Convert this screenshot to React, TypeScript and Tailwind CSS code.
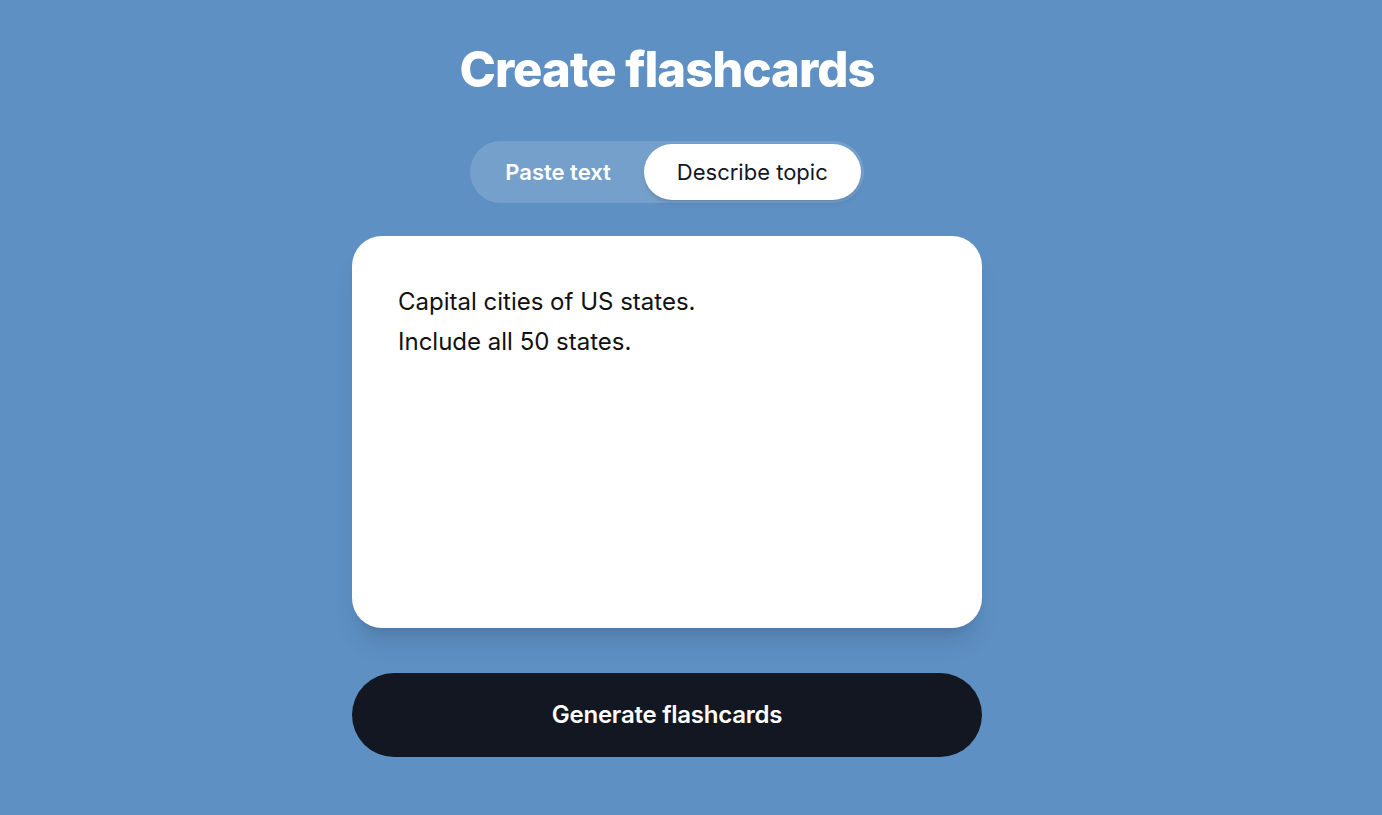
import { useState } from "react";

export default function App() {
  const [mode, setMode] = useState<"paste" | "describe">("describe");
  const [text, setText] = useState("Capital cities of US states.\nInclude all 50 states.");

  return (
    <div className="min-h-screen w-full bg-[#5e90c4] font-['Inter',sans-serif] flex flex-col items-center pr-[48px]">
      <h1 className="mt-[40px] text-[49px] leading-[60px] font-extrabold tracking-[-0.02em] text-white">
        Create flashcards
      </h1>

      <div className="mt-[41px] flex items-center h-[62px] rounded-full bg-white/15 p-[3px] pl-[2px]">
        <button
          onClick={() => setMode("paste")}
          className={
            mode === "paste"
              ? "h-full px-[33px] rounded-full bg-white text-[22px] font-normal text-[#111827] shadow-md"
              : "h-full px-[33px] rounded-full text-[22px] font-semibold text-white"
          }
        >
          Paste text
        </button>
        <button
          onClick={() => setMode("describe")}
          className={
            mode === "describe"
              ? "h-full px-[33px] rounded-full bg-white text-[22px] font-normal text-[#111827] shadow-md"
              : "h-full px-[33px] rounded-full text-[22px] font-semibold text-white"
          }
        >
          Describe topic
        </button>
      </div>

      <div className="mt-[33px] w-[630px] h-[392px] rounded-[30px] bg-white shadow-xl px-[46px] py-[46px]">
        <textarea
          value={text}
          onChange={(e) => setText(e.target.value)}
          className="w-full h-full resize-none outline-none text-[24px] leading-[40px] text-[#111] bg-transparent"
        />
      </div>

      <button className="mt-[45px] w-[630px] h-[84px] rounded-full bg-[#131722] text-white text-[24px] font-semibold tracking-[-0.01em]">
        Generate flashcards
      </button>
    </div>
  );
}
